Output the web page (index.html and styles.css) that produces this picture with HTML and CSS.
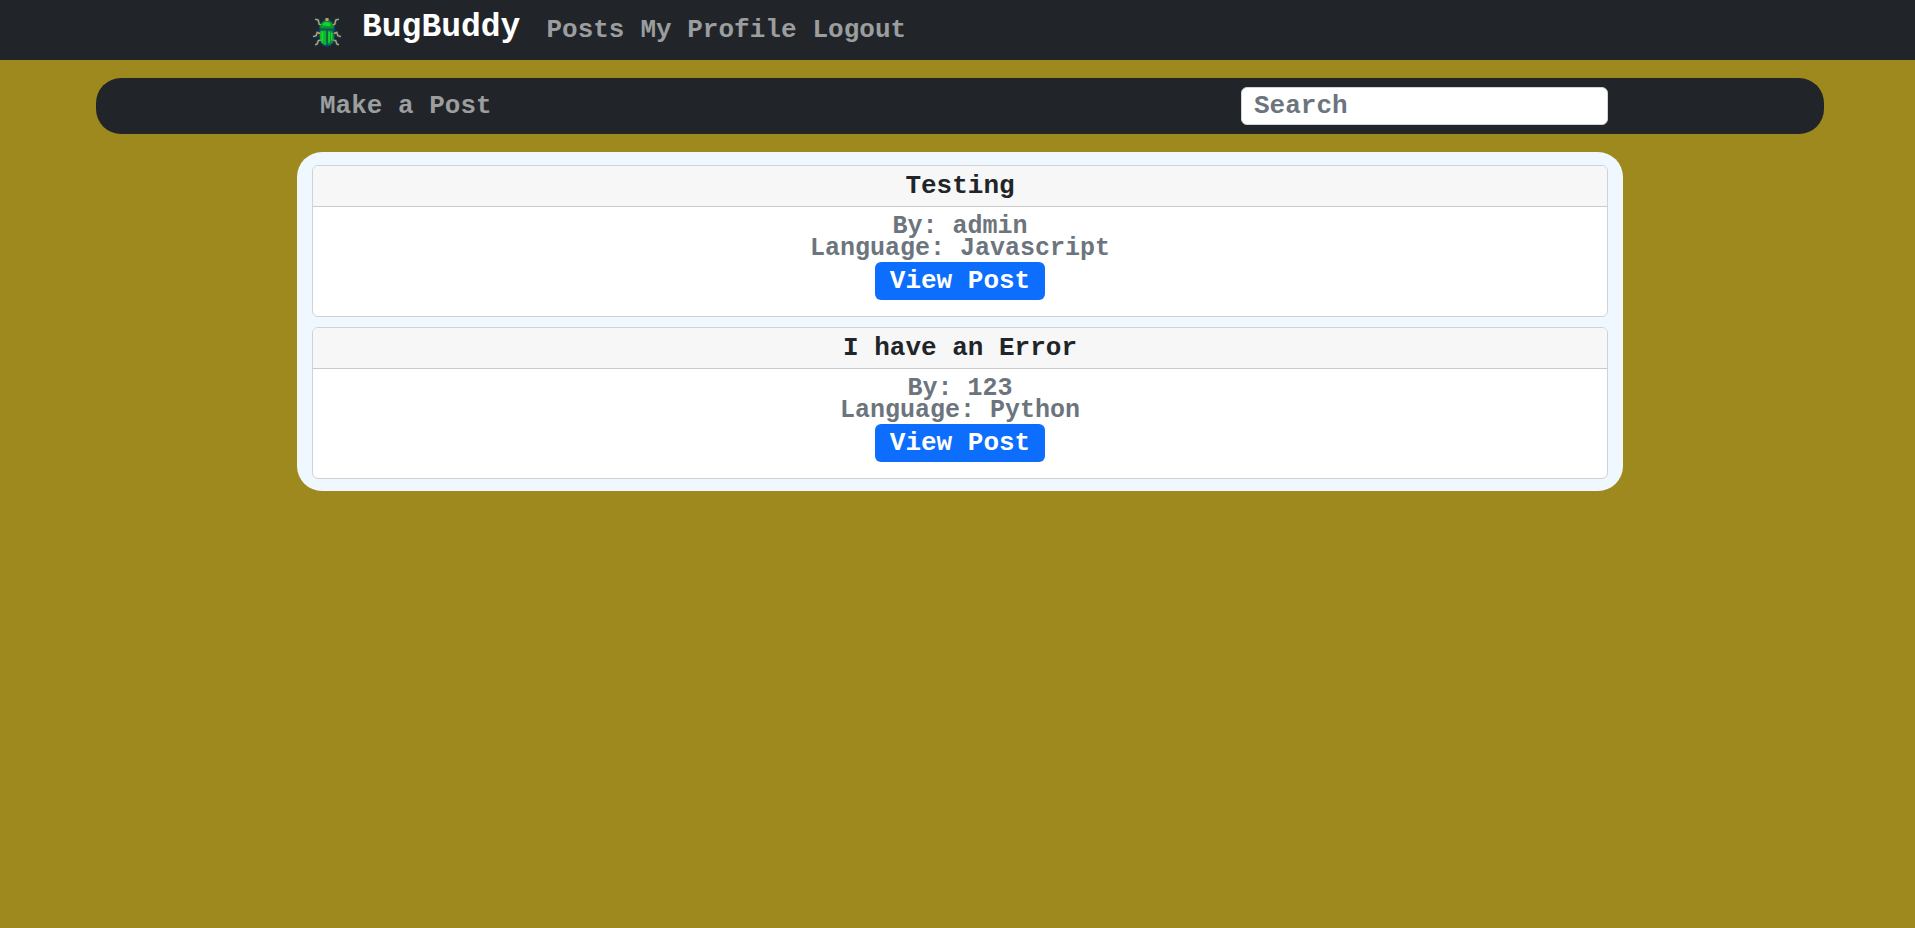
FILE: index.html
```
<!DOCTYPE html>
<html lang="en">
<head>
<meta charset="utf-8">
<title>BugBuddy</title>
<link rel="stylesheet" href="styles.css">
</head>
<body>
<div class="page">
  <nav class="navbar">
    <div class="container navbar-inner">
      <a class="brand" href="#">
        <svg class="logo" viewBox="2 1 29 29" aria-hidden="true">
          <path d="M12 9L9 8L8 4L5 3M21 9L24 8L25 4L28 3M10 17L7 16L6 19L3 20M23 17L26 16L27 19L30 20M11 23L8 24L7 27L5 28M22 23L25 24L26 27L28 28" fill="none" stroke="#0c3a68" stroke-width="3.2"/>
          <path d="M12 5Q16.500 0 21 5L24 9L25 18L23 26Q20 30 16.500 30Q13 30 10 26L8 18L9 9Z" fill="#0c4468"/>
          <path d="M12 9L9 8L8 4L5 3M21 9L24 8L25 4L28 3M10 17L7 16L6 19L3 20M23 17L26 16L27 19L30 20M11 23L8 24L7 27L5 28M22 23L25 24L26 27L28 28" fill="none" stroke="#c9a052" stroke-width="1.400"/>
          <rect x="15" y="2" width="3" height="3" fill="#c9a052"/>
          <path d="M12 6L14 5H19L21 6L23 10V12H10V9Z" fill="#0b982d"/>
          <path d="M12 8L14 6H18L20 8L19 10L12 9Z" fill="#1bd333"/>
          <path d="M10 14H16V28H14L11 26L9.500 20Z" fill="#10b42c"/>
          <path d="M17 14H22L23.500 20L22 26L19 28H17Z" fill="#0a8c36"/>
          <path d="M12 15V25M18.500 15V26M21 16V24" fill="none" stroke="#19d92b" stroke-width="1.600"/>
          <path d="M10 13H23M16.500 14V28" fill="none" stroke="#07604e" stroke-width="1"/>
        </svg>
        <span>BugBuddy</span>
      </a>
      <a class="nav-link" href="#">Posts</a>
      <a class="nav-link" href="#">My Profile</a>
      <a class="nav-link" href="#">Logout</a>
    </div>
  </nav>

  <nav class="toolbar">
    <div class="container toolbar-inner">
      <a class="nav-link" href="#">Make a Post</a>
      <input class="search" type="search" placeholder="Search" aria-label="Search">
    </div>
  </nav>

  <main class="posts">
    <article class="card">
      <h2 class="card-header">Testing</h2>
      <div class="card-body">
        <p class="meta">By: admin</p>
        <p class="meta">Language: Javascript</p>
        <button class="btn" type="button">View Post</button>
      </div>
    </article>
    <article class="card">
      <h2 class="card-header">I have an Error</h2>
      <div class="card-body">
        <p class="meta">By: 123</p>
        <p class="meta">Language: Python</p>
        <button class="btn" type="button">View Post</button>
      </div>
    </article>
  </main>
</div>
</body>
</html>
```
FILE: styles.css
```
* {
  box-sizing: border-box;
}

body {
  margin: 0;
  overflow-x: hidden;
  background: #9d891d;
  color: #212529;
  font: bold 26px/24px "Liberation Mono", monospace;
}

.page {
  margin-right: -5px;
}

.container {
  width: 100%;
  max-width: 1320px;
  margin: 0 auto;
  padding: 0 12px;
  display: flex;
  align-items: center;
}

.navbar {
  background: #212529;
}

.navbar-inner {
  min-height: 60px;
}

.brand {
  display: flex;
  align-items: center;
  gap: 20px;
  margin-right: 18px;
  color: #fff;
  font-size: 33px;
  line-height: 30px;
  text-decoration: none;
}

.brand span {
  padding-bottom: 4px;
}

.logo {
  width: 30px;
  height: 30px;
  margin-top: 4px;
}

.nav-link {
  padding: 8px;
  color: #9b9d9e;
  text-decoration: none;
  white-space: nowrap;
}

.toolbar {
  width: 90%;
  margin: 18px auto;
  background: #212529;
  border-radius: 25px;
}

.toolbar-inner {
  min-height: 56px;
  justify-content: space-between;
}

.search {
  width: 367px;
  height: 38px;
  padding: 6px 12px;
  border: 1px solid #ced4da;
  border-radius: 6px;
  background: #fff;
  color: #212529;
  font: inherit;
  appearance: none;
}

.search::placeholder {
  color: #6c757d;
  opacity: 1;
}

.posts {
  width: 100%;
  max-width: 1326px;
  margin: 0 auto;
  padding: 13px 15px 12px;
  display: grid;
  gap: 10px;
  background: #f0f8ff;
  border-radius: 25px;
}

.card {
  overflow: hidden;
  border: 1px solid #d0d2d4;
  border-radius: 6px;
  background: #fff;
  text-align: center;
}

.card-header {
  margin: 0;
  padding: 8px 16px;
  border-bottom: 1px solid #cacaca;
  background: #f7f7f7;
  font: inherit;
}

.card-body {
  padding: 9px 16px 16px;
}

.meta {
  margin: 0;
  color: #6c757d;
  font-size: 25px;
  line-height: 22px;
}

.btn {
  min-width: 170px;
  height: 38px;
  margin-top: 2px;
  padding: 0 12px;
  display: inline-block;
  vertical-align: top;
  border: 0;
  border-radius: 6px;
  background: #0d6efd;
  color: #fff;
  font: inherit;
}
```
